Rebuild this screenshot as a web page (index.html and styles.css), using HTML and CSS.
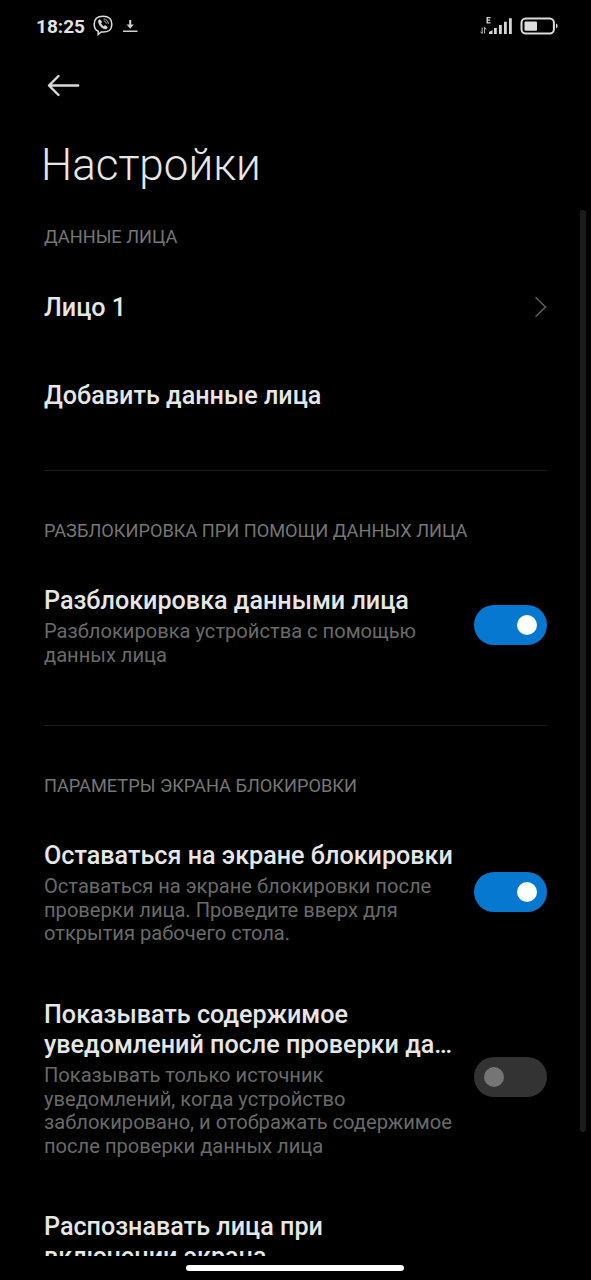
FILE: index.html
```html
<!DOCTYPE html>
<html lang="ru">
<head>
<meta charset="utf-8">
<title>Настройки</title>
<link rel="stylesheet" href="styles.css">
</head>
<body>
<div class="screen">
  <header class="status">
    <div class="status-left">
      <span class="time">18:25</span>
      <svg class="viber" width="20" height="21" viewBox="0 0 20 21" fill="none" stroke="#dcdcdc">
        <path d="M10 1.2C4 1.2 1.2 3.4 1.2 9.1c0 4 1.3 6.2 4 7.2v3.2l3-2.6c7.400.6 10.600-1.700 10.600-7.800C18.800 3.400 16 1.200 10 1.200Z" stroke-width="1.500"/>
        <path d="M5.500 5.600 7 4.600l1.700 2.300-.9 1.500c.6 1.500 1.500 2.400 2.900 3.100l1.400-.9 2.300 1.700-.9 1.500c-4 .9-8.300-4.200-8-8.200Z" fill="#dcdcdc" stroke-width=".7"/>
        <path d="M10.500 4c3 .1 4.800 2 4.900 5M10.700 6c1.600.1 2.500 1 2.600 2.700" stroke-width=".8"/>
      </svg>
      <svg class="download" width="15" height="13" viewBox="0 0 15 13" fill="#cfcfcf">
        <path d="M6.200 0h2v4.500h2.600L7.200 8.700 3.600 4.500h2.600ZM0 10.500h14.500v1.500H0Z"/>
      </svg>
    </div>
    <div class="status-right">
      <svg width="32" height="20" viewBox="0 0 32 20" fill="#d6d6d6">
        <path d="M6.500 0h4v1.200H7.900v1.400h2.300v1.100H7.900v1.500h2.600v1.200h-4Z"/>
        <path d="M2.200 10.500v6M.5 14.700l1.700 2M4.600 16.500v-6M6.200 12.300l-1.600-2" fill="none" stroke="#bdbdbd"/>
        <path d="M9 17v-2l3.500-2v4ZM14 11h2.800v6H14ZM19 8h2.800v9H19ZM24 4.800h2.800V17H24ZM29 1.300h2.800V17H29Z"/>
      </svg>
      <svg width="38" height="18" viewBox="0 0 38 18">
        <rect x="1.500" y="1.500" width="32.400" height="15" rx="4.200" fill="none" stroke="#dcdcdc" stroke-width="2"/>
        <rect x="4.500" y="4.500" width="12.500" height="9.200" rx="1" fill="#dcdcdc"/>
        <path d="M36 6.600q1.600.4 1.600 2.400t-1.600 2.400Z" fill="#dcdcdc"/>
      </svg>
    </div>
  </header>
  <nav class="toolbar">
    <svg width="33" height="23" viewBox="0 0 33 23" fill="none" stroke="#d9d9d9" stroke-width="2.400" stroke-linecap="round" stroke-linejoin="round">
      <path d="M31.200 11.500H2M11.500 2 2 11.500l9.500 9.500"/>
    </svg>
  </nav>
  <h1 class="title">Настройки</h1>
  <main class="list">
    <section class="group group-faces">
      <h2 class="label">ДАННЫЕ ЛИЦА</h2>
      <div class="row row-single">
        <div class="name">Лицо 1</div>
        <svg class="chevron" width="12" height="22" viewBox="0 0 12 22" fill="none" stroke="#606060" stroke-width="1.500">
          <path d="M.5 1.200 10.500 11 .5 20.800"/>
        </svg>
      </div>
      <div class="row row-single"><div class="name">Добавить данные лица</div></div>
    </section>
    <section class="group group-unlock divided">
      <h2 class="label">РАЗБЛОКИРОВКА ПРИ ПОМОЩИ ДАННЫХ ЛИЦА</h2>
      <div class="row">
        <div class="text">
          <div class="name">Разблокировка данными лица</div>
          <p class="summary">Разблокировка устройства с помощью<br>данных лица</p>
        </div>
        <div class="switch on"><i class="knob"></i></div>
      </div>
    </section>
    <section class="group divided">
      <h2 class="label">ПАРАМЕТРЫ ЭКРАНА БЛОКИРОВКИ</h2>
      <div class="row">
        <div class="text">
          <div class="name">Оставаться на экране блокировки</div>
          <p class="summary">Оставаться на экране блокировки после<br>проверки лица. Проведите вверх для<br>открытия рабочего стола.</p>
        </div>
        <div class="switch on"><i class="knob"></i></div>
      </div>
      <div class="row">
        <div class="text">
          <div class="name">Показывать содержимое<br>уведомлений после проверки да…</div>
          <p class="summary">Показывать только источник<br>уведомлений, когда устройство<br>заблокировано, и отображать содержимое<br>после проверки данных лица</p>
        </div>
        <div class="switch"><i class="knob"></i></div>
      </div>
      <div class="row">
        <div class="text">
          <div class="name">Распознавать лица при<br>включении экрана</div>
        </div>
      </div>
    </section>
  </main>
  <footer class="gesture"><div class="pill"></div></footer>
  <div class="scrollbar"></div>
</div>
</body>
</html>
```
FILE: styles.css
```css
* { box-sizing: border-box; }
body {
  margin: 0;
  background: #000;
  color: #e6e6e6;
  font-family: Roboto, "Noto Sans", sans-serif;
}
h1, h2, p { margin: 0; font-weight: 400; }
svg { display: block; flex: none; }
.screen {
  position: relative;
  display: flex;
  flex-direction: column;
  width: 591px;
  height: 1280px;
  overflow: hidden;
}
.status {
  display: flex;
  justify-content: space-between;
  height: 52px;
  padding: 0 33px 0 36px;
}
.status-left { display: flex; align-items: flex-start; }
.time { padding-top: 15px; font-size: 19px; line-height: 24px; font-weight: 700; color: #e2e2e2; }
.viber { margin: 15px 0 0 8px; }
.download { margin: 20px 0 0 10px; }
.status-right { display: flex; gap: 8px; padding-top: 17px; }
.toolbar { height: 87px; padding: 22px 0 0 47px; }
.title {
  height: 72px;
  padding-left: 41px;
  font-size: 44px;
  line-height: 52px;
  font-weight: 300;
  white-space: nowrap;
}
.list { flex: none; height: 1045px; padding: 15px 44px 0; overflow: hidden; }
.group-faces { padding-bottom: 30px; }
.group-unlock { padding-bottom: 31px; }
.label {
  margin-bottom: 16px;
  font-size: 18.200px;
  line-height: 22px;
  color: #767676;
  white-space: nowrap;
}
.row {
  display: flex;
  justify-content: space-between;
  align-items: center;
  padding: 27px 0;
}
.row-single { height: 88px; padding: 0; }
.chevron { margin-bottom: 2px; }
.divided { border-top: 1px solid #1b1b1b; padding-top: 49px; }
.divided .label { margin-bottom: 17px; }
.name { font-size: 25.160px; line-height: 30px; font-weight: 500; white-space: nowrap; }
.summary { margin-top: 4px; font-size: 20.120px; line-height: 23.600px; color: #6a6a6a; white-space: nowrap; }
.switch {
  flex: none;
  display: flex;
  align-items: center;
  width: 73px;
  height: 40px;
  padding: 0 10px;
  margin-bottom: 4px;
  border-radius: 20px;
  background: #333;
}
.switch.on { justify-content: flex-end; background: #0778d0; }
.knob { width: 20px; height: 20px; border-radius: 50%; background: #757575; }
.on .knob { background: #fff; }
.gesture { display: flex; justify-content: center; padding: 9px 1px 0 0; }
.pill { width: 218px; height: 6px; border-radius: 3px; background: #fff; }
.scrollbar {
  position: absolute;
  top: 210px;
  right: 5px;
  width: 6px;
  height: 922px;
  border-radius: 3px;
  background: #1b1b1b;
}
```
